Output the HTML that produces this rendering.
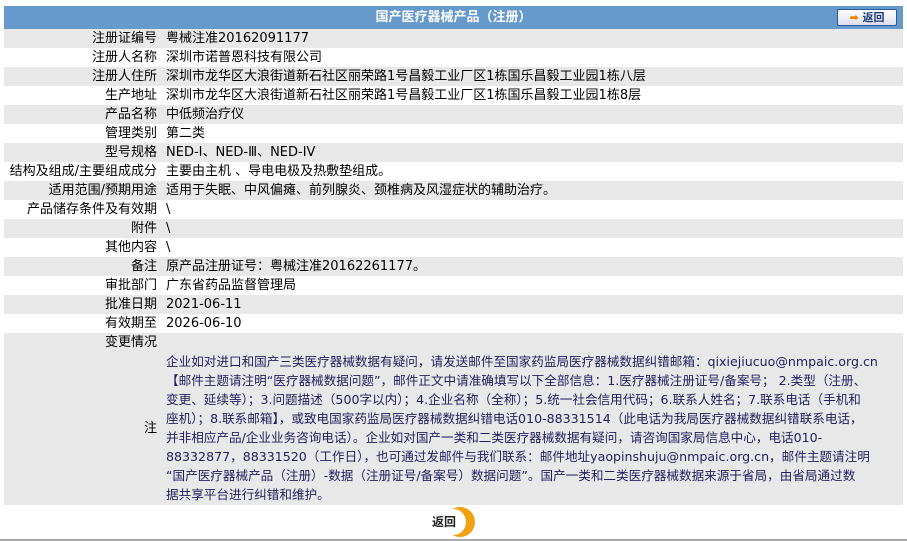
<!DOCTYPE html>
<html><head><meta charset="utf-8"><style>
body{margin:0;background:#fff;font-family:"DejaVu Sans","Noto Sans CJK SC",sans-serif;font-size:13px;color:#000}
table{position:absolute;left:4px;top:6px;width:899px;border-collapse:collapse;table-layout:fixed}
td{padding:0;height:19px;line-height:19px;white-space:nowrap;overflow:visible}
.h{background:#6699cc;height:23px;color:#fff;font-weight:bold;text-align:center;position:relative;font-size:13px}
.l{text-align:right;padding-right:9px}
.g td{background:#e8e8e8}
.note{color:#1f1f5e;line-height:19px;padding:0 0 1px;font-size:12.6px}
.btn{position:absolute;right:6px;top:3px;width:58px;height:15px;border:1px solid #2a5a9a;border-radius:2px;background:linear-gradient(#fff,#dde);color:#1a3a7a;font-size:11px;line-height:15px;font-weight:bold}
</style></head><body>
<table>
<colgroup><col style="width:162px"><col></colgroup>
<tr><td colspan="2" class="h">国产医疗器械产品（注册）<span class="btn"><span style="color:#e88a00">➡</span> 返回</span></td></tr>
<tr class="g"><td class="l">注册证编号</td><td>粤械注准20162091177</td></tr>
<tr><td class="l">注册人名称</td><td>深圳市诺普恩科技有限公司</td></tr>
<tr class="g"><td class="l">注册人住所</td><td>深圳市龙华区大浪街道新石社区丽荣路1号昌毅工业厂区1栋国乐昌毅工业园1栋八层</td></tr>
<tr><td class="l">生产地址</td><td>深圳市龙华区大浪街道新石社区丽荣路1号昌毅工业厂区1栋国乐昌毅工业园1栋8层</td></tr>
<tr class="g"><td class="l">产品名称</td><td>中低频治疗仪</td></tr>
<tr><td class="l">管理类别</td><td>第二类</td></tr>
<tr class="g"><td class="l">型号规格</td><td>NED-I、NED-Ⅲ、NED-IV</td></tr>
<tr><td class="l">结构及组成/主要组成成分</td><td>主要由主机 、导电电极及热敷垫组成。</td></tr>
<tr class="g"><td class="l">适用范围/预期用途</td><td>适用于失眠、中风偏瘫、前列腺炎、颈椎病及风湿症状的辅助治疗。</td></tr>
<tr><td class="l">产品储存条件及有效期</td><td>\</td></tr>
<tr class="g"><td class="l">附件</td><td>\</td></tr>
<tr><td class="l">其他内容</td><td>\</td></tr>
<tr class="g"><td class="l">备注</td><td>原产品注册证号：粤械注准20162261177。</td></tr>
<tr><td class="l">审批部门</td><td>广东省药品监督管理局</td></tr>
<tr class="g"><td class="l">批准日期</td><td>2021-06-11</td></tr>
<tr><td class="l">有效期至</td><td>2026-06-10</td></tr>
<tr class="g"><td class="l">变更情况</td><td></td></tr>
<tr class="g"><td class="l">注</td><td class="note">企业如对进口和国产三类医疗器械数据有疑问，请发送邮件至国家药监局医疗器械数据纠错邮箱：qixiejiucuo@nmpaic.org.cn<br>【邮件主题请注明“医疗器械数据问题”，邮件正文中请准确填写以下全部信息：1.医疗器械注册证号/备案号； 2.类型（注册、<br>变更、延续等）；3.问题描述（500字以内）；4.企业名称（全称）；5.统一社会信用代码；6.联系人姓名；7.联系电话（手机和<br>座机）；8.联系邮箱】，或致电国家药监局医疗器械数据纠错电话010-88331514（此电话为我局医疗器械数据纠错联系电话，<br>并非相应产品/企业业务咨询电话）。企业如对国产一类和二类医疗器械数据有疑问，请咨询国家局信息中心，电话010-<br>88332877，88331520（工作日），也可通过发邮件与我们联系：邮件地址yaopinshuju@nmpaic.org.cn，邮件主题请注明<br>“国产医疗器械产品（注册）-数据（注册证号/备案号）数据问题”。国产一类和二类医疗器械数据来源于省局，由省局通过数<br>据共享平台进行纠错和维护。</td></tr>
</table>
<div style="position:absolute;left:445px;top:507px;width:30px;height:30px;border-radius:50%;background:#f0a010"></div>
<div style="position:absolute;left:441px;top:509px;width:25px;height:26px;border-radius:50%;background:#fff"></div>
<div style="position:absolute;left:432px;top:513px;font-weight:bold;font-size:12px;color:#222">返回</div>
<div style="position:absolute;left:0;top:539px;width:907px;height:2px;background:#aaa"></div>
</body></html>
